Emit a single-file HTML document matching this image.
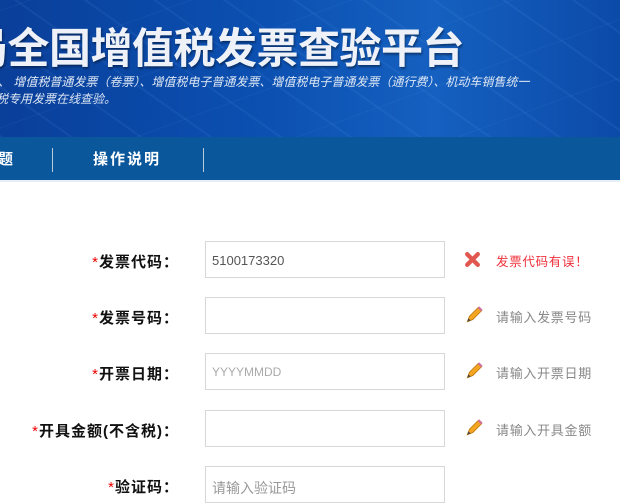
<!DOCTYPE html>
<html><head><meta charset="utf-8"><style>
*{margin:0;padding:0;box-sizing:border-box}
body{width:620px;height:504px;overflow:hidden;background:#fff;font-family:"Liberation Sans","Noto Sans CJK SC",sans-serif;position:relative}
.banner{position:absolute;left:0;top:0;width:620px;height:137px;background:linear-gradient(90deg,#0a3f9a 0%,#0b4fb0 40%,#1560c0 70%,#0c4aa8 100%);overflow:hidden}
.banner:before{content:"";position:absolute;inset:0;background:repeating-linear-gradient(35deg,rgba(120,190,255,.08) 0 2px,transparent 2px 40px),repeating-linear-gradient(-20deg,rgba(120,190,255,.06) 0 1px,transparent 1px 55px)}
.title{position:absolute;left:-34px;top:15px;font-size:42px;font-weight:bold;color:#eef2f8;letter-spacing:-0.5px;white-space:nowrap;text-shadow:1px 2px 2px rgba(0,0,0,.4)}
.sub{position:absolute;font-size:12px;font-style:italic;color:#dfe8f5;white-space:nowrap}
.nav{position:absolute;left:0;top:137px;width:620px;height:45px;background:#0b579c;border-bottom:2px solid #e6eef6}
.nav span{position:absolute;top:11px;font-size:15px;font-weight:bold;color:#fff;letter-spacing:2px}
.sep{position:absolute;top:11px;width:1px;height:24px;background:#b7c9dc}
.lab{position:absolute;right:441px;font-size:15px;font-weight:bold;color:#111;white-space:nowrap;letter-spacing:1px}
.lab i{color:#e00;font-style:normal;font-weight:normal}
.inp{position:absolute;left:205px;width:240px;height:37px;border:1px solid #d8d8d8;font-size:13px;color:#999;padding:11px 0 0 6px}
.hint{position:absolute;left:496px;font-size:13px;color:#888;white-space:nowrap;letter-spacing:0.7px}
.ic{position:absolute;left:464px}
</style></head><body>
<div class="banner">
<div class="title">局全国增值税发票查验平台</div>
<div class="sub" style="left:-2px;top:73px">、 增值税普通发票（卷票）、增值税电子普通发票、增值税电子普通发票（通行费）、机动车销售统一</div>
<div class="sub" style="left:-4px;top:90px">税专用发票在线查验。</div>
</div>
<div class="nav">
<span style="left:-2px">题</span><div class="sep" style="left:52px"></div>
<span style="left:93px">操作说明</span><div class="sep" style="left:203px"></div>
</div>

<div class="lab" style="top:251px"><i>*</i>发票代码：</div>
<div class="inp" style="top:241px;color:#555">5100173320</div>
<svg class="ic" style="top:251px" width="17" height="17" viewBox="0 0 16 16"><path d="M3 3L13 13M13 3L3 13" stroke="#e0584f" stroke-width="4" stroke-linecap="round"/></svg>
<div class="hint" style="top:251px;color:#f0303a;font-size:12.5px">发票代码有误！</div>

<div class="lab" style="top:307px"><i>*</i>发票号码：</div>
<div class="inp" style="top:297px"></div>
<svg class="ic" style="top:305px" width="20" height="20" viewBox="0 0 18 18"><path d="M3 15L5 10L13 2L16 5L8 13Z" fill="#f4a623" stroke="#c07a10" stroke-width="0.8"/><path d="M13 2L16 5" stroke="#d070a0" stroke-width="2"/><path d="M3 15L4 12L6 14Z" fill="#444"/></svg>
<div class="hint" style="top:307px">请输入发票号码</div>

<div class="lab" style="top:363px"><i>*</i>开票日期：</div>
<div class="inp" style="top:353px;color:#aaa;font-size:12px">YYYYMMDD</div>
<svg class="ic" style="top:361px" width="20" height="20" viewBox="0 0 18 18"><path d="M3 15L5 10L13 2L16 5L8 13Z" fill="#f4a623" stroke="#c07a10" stroke-width="0.8"/><path d="M13 2L16 5" stroke="#d070a0" stroke-width="2"/><path d="M3 15L4 12L6 14Z" fill="#444"/></svg>
<div class="hint" style="top:363px">请输入开票日期</div>

<div class="lab" style="top:420px"><i>*</i>开具金额(不含税)：</div>
<div class="inp" style="top:410px"></div>
<svg class="ic" style="top:418px" width="20" height="20" viewBox="0 0 18 18"><path d="M3 15L5 10L13 2L16 5L8 13Z" fill="#f4a623" stroke="#c07a10" stroke-width="0.8"/><path d="M13 2L16 5" stroke="#d070a0" stroke-width="2"/><path d="M3 15L4 12L6 14Z" fill="#444"/></svg>
<div class="hint" style="top:420px">请输入开具金额</div>

<div class="lab" style="top:476px"><i>*</i>验证码：</div>
<div class="inp" style="top:466px;font-size:14px">请输入验证码</div>
</body></html>
